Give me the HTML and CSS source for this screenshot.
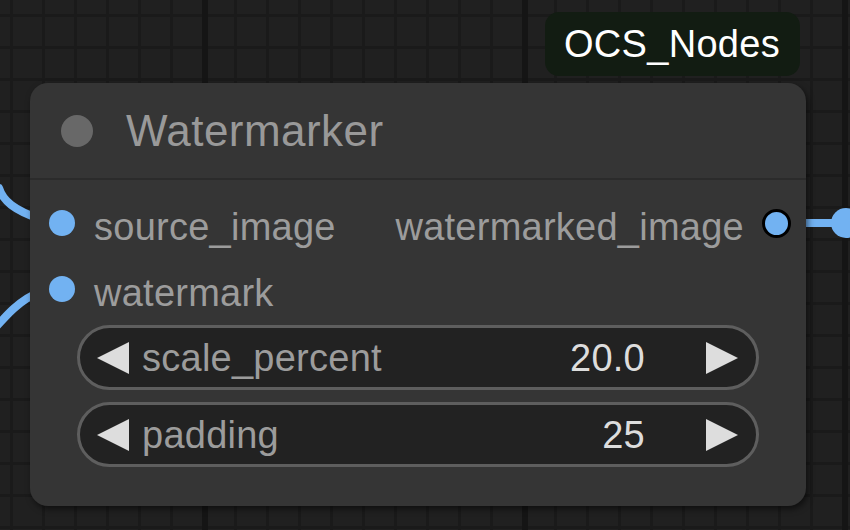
FILE: index.html
```html
<!DOCTYPE html>
<html>
<head>
<meta charset="utf-8">
<link rel="stylesheet" href="styles.css">
</head>
<body>
<div class="canvas">
  <svg class="links" width="850" height="530" viewBox="0 0 850 530">
    <path d="M -1 188 C 3 201, 14 210, 40 219 L 62 223" class="link"/>
    <path d="M -20 345 C 4 318, 18 300, 40 292 L 62 289" class="link"/>
    <path d="M 777 223 L 845 223" class="link"/>
    <circle cx="846" cy="223" r="15" class="link-dot"/>
  </svg>
  <div class="node-wrap">
    <div class="badge">OCS_Nodes</div>
    <div class="node">
      <div class="title">
        <span class="title-dot"></span>
        <span class="title-text">Watermarker</span>
      </div>
      <div class="body">
        <div class="slot-row">
          <div class="slot in"><span class="dot"></span><span class="slot-label">source_image</span></div>
          <div class="slot out"><span class="slot-label">watermarked_image</span><span class="dot dot-out"></span></div>
        </div>
        <div class="slot-row">
          <div class="slot in"><span class="dot"></span><span class="slot-label">watermark</span></div>
        </div>
        <div class="widgets">
          <div class="widget">
            <span class="arrow arrow-left"></span>
            <span class="w-label">scale_percent</span>
            <span class="w-value">20.0</span>
            <span class="arrow arrow-right"></span>
          </div>
          <div class="widget">
            <span class="arrow arrow-left"></span>
            <span class="w-label">padding</span>
            <span class="w-value">25</span>
            <span class="arrow arrow-right"></span>
          </div>
        </div>
      </div>
    </div>
  </div>
</div>
</body>
</html>
```

FILE: styles.css
```css
html, body {
  margin: 0;
  padding: 0;
}
body {
  width: 850px;
  height: 530px;
  overflow: hidden;
  font-family: "Liberation Sans", Arial, sans-serif;
  background-color: #202020;
  background-image:
    repeating-linear-gradient(90deg, transparent 0 202px, #151515 202px 208px, transparent 208px 320px),
    repeating-linear-gradient(90deg, transparent 0 10px, #1a1a1a 10px 13px, transparent 13px 32px),
    repeating-linear-gradient(180deg, transparent 0 14px, #1a1a1a 14px 17px, transparent 17px 32px);
}
.canvas {
  position: relative;
  width: 850px;
  height: 530px;
}
.links {
  position: absolute;
  left: 0;
  top: 0;
}
.link {
  fill: none;
  stroke: #72b2f2;
  stroke-width: 8;
  stroke-linecap: round;
}
.link-dot {
  fill: #72b2f2;
}
.node-wrap {
  position: absolute;
  left: 30px;
  top: 12px;
  width: 776px;
  display: flex;
  flex-direction: column;
  gap: 7px;
}
.badge {
  align-self: flex-end;
  margin-right: 6px;
  height: 64px;
  padding: 0 20px 0 19px;
  box-sizing: border-box;
  background: #121c12;
  border-radius: 14px;
  color: #ffffff;
  font-size: 38px;
  line-height: 64px;
  letter-spacing: 0.3px;
}
.node {
  height: 423px;
  background: #353535;
  border-radius: 18px;
  box-shadow: 2px 3px 6px rgba(0, 0, 0, 0.55);
  display: flex;
  flex-direction: column;
}
.title {
  height: 95px;
  display: flex;
  align-items: center;
  padding-left: 31px;
  border-bottom: 2px solid #2b2b2b;
}
.title-dot {
  width: 32px;
  height: 32px;
  border-radius: 50%;
  background: #686868;
  margin-right: 33px;
}
.title-text {
  font-size: 44px;
  line-height: 44px;
  color: #999999;
  letter-spacing: 0.45px;
}
.body {
  display: flex;
  flex-direction: column;
  padding-top: 10px;
}
.slot-row {
  height: 66px;
  display: flex;
  justify-content: space-between;
  align-items: center;
}
.slot {
  display: flex;
  align-items: center;
}
.slot.in {
  padding-left: 19px;
}
.slot.out {
  padding-right: 15px;
}
.dot {
  width: 26px;
  height: 26px;
  border-radius: 50%;
  background: #72b2f2;
}
.dot-out {
  width: 23px;
  height: 23px;
  border: 3px solid #000;
}
.slot-label {
  font-size: 38px;
  line-height: 38px;
  color: #9c9c9c;
  padding-top: 8px;
  letter-spacing: 0.25px;
}
.slot.in .slot-label {
  margin-left: 19px;
}
.slot.out .slot-label {
  margin-right: 18px;
}
.widgets {
  display: flex;
  flex-direction: column;
  gap: 12px;
  padding: 3px 47px 0;
}
.widget {
  height: 65px;
  box-sizing: border-box;
  border: 3px solid #5e5e5e;
  border-radius: 33px;
  background: #222222;
  display: flex;
  align-items: center;
  padding: 0 18px 0 17px;
}
.arrow {
  width: 0;
  height: 0;
  border-top: 16px solid transparent;
  border-bottom: 16px solid transparent;
}
.arrow-left {
  border-right: 32px solid #dddddd;
}
.arrow-right {
  border-left: 32px solid #dddddd;
}
.w-label {
  margin-left: 13px;
  font-size: 38px;
  line-height: 38px;
  color: #9c9c9c;
  flex: 1;
  letter-spacing: 0.25px;
}
.w-value {
  font-size: 38px;
  line-height: 38px;
  color: #dddddd;
  margin-right: 61px;
  letter-spacing: 0.25px;
}
```
